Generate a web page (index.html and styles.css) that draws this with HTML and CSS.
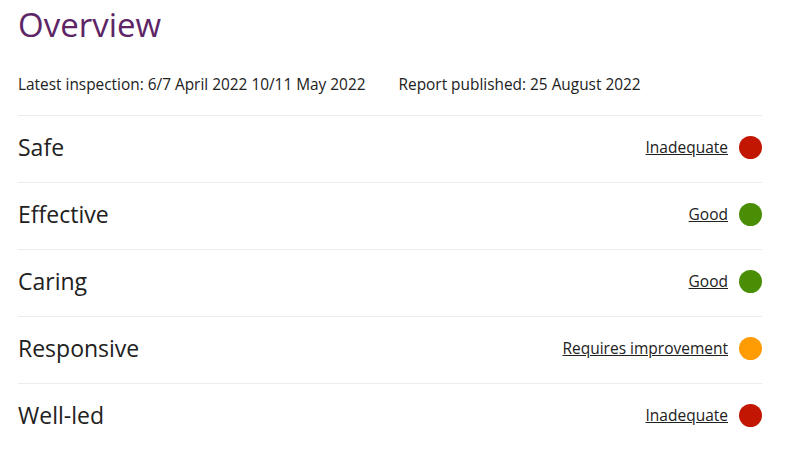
FILE: index.html
```html
<!DOCTYPE html>
<html lang="en">
<head>
<meta charset="UTF-8">
<meta name="viewport" content="width=device-width, initial-scale=1.0">
<title>Overview</title>
<link rel="stylesheet" href="styles.css">
</head>
<body>

<div class="overview">
  <h1 class="title">Overview</h1>
  <div class="meta">
    <span>Latest inspection: 6/7 April 2022 10/11 May 2022</span>
    <span>Report published: 25 August 2022</span>
  </div>

  <ul class="ratings">
    <li class="rating-row">
      <span class="rating-name">Safe</span>
      <span class="rating-value"><a href="#">Inadequate</a><span class="dot dot-red"></span></span>
    </li>
    <li class="rating-row">
      <span class="rating-name">Effective</span>
      <span class="rating-value"><a href="#">Good</a><span class="dot dot-green"></span></span>
    </li>
    <li class="rating-row">
      <span class="rating-name">Caring</span>
      <span class="rating-value"><a href="#">Good</a><span class="dot dot-green"></span></span>
    </li>
    <li class="rating-row">
      <span class="rating-name">Responsive</span>
      <span class="rating-value"><a href="#">Requires improvement</a><span class="dot dot-amber"></span></span>
    </li>
    <li class="rating-row">
      <span class="rating-name">Well-led</span>
      <span class="rating-value"><a href="#">Inadequate</a><span class="dot dot-red"></span></span>
    </li>
  </ul>
</div>

</body>
</html>
```

FILE: styles.css
```css
body {
  margin: 0;
  font-family: "Open Sans", Arial, sans-serif;
  color: #212121;
  background-color: #fff;
}

.overview {
  width: 744px;
  padding: 0 18px;
}

.title {
  margin: 0;
  padding-top: 2px;
  font-size: 33px;
  font-weight: 400;
  line-height: 46px;
  color: #5d2566;
}

.meta {
  display: flex;
  gap: 33px;
  margin-top: 26px;
  font-size: 15.4px;
  line-height: 22px;
  padding-bottom: 19px;
}

.ratings {
  list-style: none;
  margin: 0;
  padding: 0;
}

.rating-row {
  display: flex;
  justify-content: space-between;
  align-items: center;
  box-sizing: border-box;
  height: 67px;
  padding-bottom: 4px;
  border-top: 1px solid #ececec;
}

.rating-name {
  font-size: 23px;
}

.rating-value {
  display: flex;
  align-items: center;
  gap: 11px;
  font-size: 15.5px;
}

.rating-value a {
  color: #212121;
  text-decoration: underline;
}

.dot {
  width: 23px;
  height: 23px;
  border-radius: 50%;
}

.dot-red { background-color: #c21502; }
.dot-green { background-color: #4a8e05; }
.dot-amber { background-color: #ff9b03; }
```
